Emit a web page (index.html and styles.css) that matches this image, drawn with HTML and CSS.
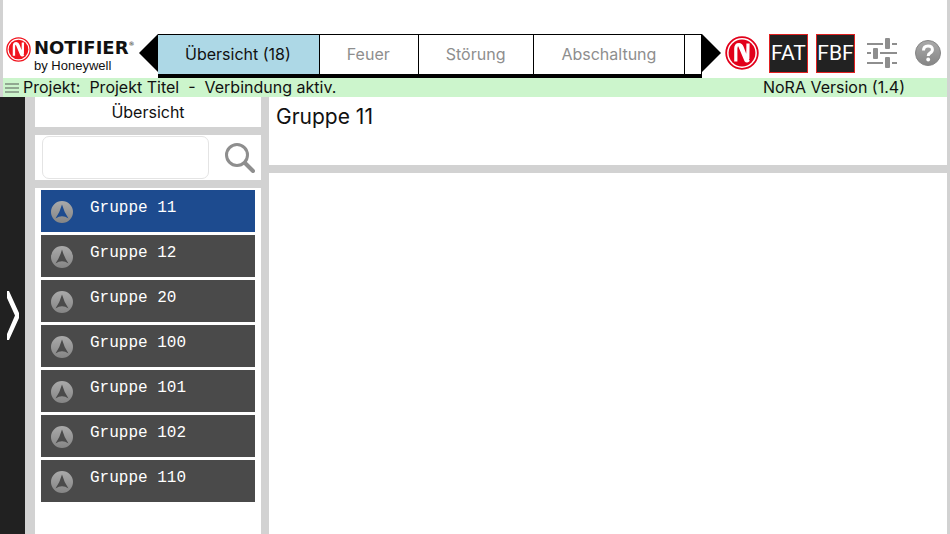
FILE: index.html
```html
<!DOCTYPE html>
<html lang="de">

<head>
    <meta charset="UTF-8">
    <meta name="viewport" content="width=device-width, initial-scale=1.0">
    <title>NoRA</title>
    <link rel="stylesheet" href="styles.css">
</head>

<body>
    <!-- shared symbols -->
    <svg class="symbols" aria-hidden="true">
        <defs>
            <linearGradient id="grey" x1="0" y1="0" x2="0" y2="1">
                <stop offset="0" stop-color="#aaa" />
                <stop offset="1" stop-color="#858585" />
            </linearGradient>
            <symbol id="logo" viewBox="0 0 34 34">
                <circle cx="17" cy="17" r="15.8" fill="#fff" stroke="currentColor" stroke-width="1.8" />
                <circle cx="17" cy="17" r="13.4" fill="currentColor" />
                <path d="M10.800 25.500V12.500Q10.800 8.500 14 8.500 16 8.500 17 11L21 21.500Q22 24 22.800 22.500L23 7.500" fill="none" stroke="#fff" stroke-width="3.2" />
                <path d="M14 9L20.500 24.500Q22 26.500 24 24" fill="none" stroke="#fff" stroke-width="2.4" />
            </symbol>
            <symbol id="arrow" viewBox="0 0 22 22">
                <path fill="url(#grey)" fill-rule="evenodd" d="M11 0a11 11 0 1 0 0 22 11 11 0 0 0 0-22zM11 3.500Q13 11 17.500 17.500 11 13 4.500 17.500 9 11 11 3.500z" />
            </symbol>
        </defs>
    </svg>

    <div class="app">
        <header class="header">
            <div class="brand">
                <svg class="brand-logo"><use href="#logo" /></svg>
                <div class="brand-text">
                    <div class="brand-name">NOTIFIER<sup>®</sup></div>
                    <div class="brand-sub">by Honeywell</div>
                </div>
            </div>
            <nav class="tabs">
                <button class="tab-scroll" type="button" aria-label="Zurück">
                    <svg viewBox="0 0 19 38"><path d="M19 0v38L0 19z" /></svg>
                </button>
                <div class="tab-list">
                    <button class="tab active" type="button">Übersicht (18)</button>
                    <button class="tab" type="button">Feuer</button>
                    <button class="tab" type="button">Störung</button>
                    <button class="tab" type="button">Abschaltung</button>
                </div>
                <button class="tab-scroll" type="button" aria-label="Weiter">
                    <svg viewBox="0 0 19 38"><path d="M0 0v38l19-19z" /></svg>
                </button>
            </nav>
            <div class="tools">
                <button class="tool" type="button" aria-label="Notifier">
                    <svg class="tool-logo"><use href="#logo" /></svg>
                </button>
                <button class="tool panel" type="button">FAT</button>
                <button class="tool panel" type="button">FBF</button>
                <button class="tool sliders" type="button" aria-label="Einstellungen">
                    <svg width="30" height="30" viewBox="0 0 30 30" fill="#8e8e8e">
                        <path d="M0 5h16v2H0zM25 5h5v2h-5zM0 14h4v2H0zM13 14h17v2H13zM0 24h16v2H0zM25 24h5v2h-5z" />
                        <rect x="18" y="0" width="5" height="11" rx="1" />
                        <rect x="6" y="10" width="5" height="11" rx="1" />
                        <rect x="18" y="19" width="5" height="11" rx="1" />
                    </svg>
                </button>
                <button class="tool" type="button" aria-label="Hilfe">
                    <svg width="26" height="26" viewBox="0 0 26 26">
                        <circle cx="13" cy="13" r="12.5" fill="url(#grey)" stroke="#858585" />
                        <path d="M8.500 10.500Q8.500 6 13 6t4.400 3.800q0 2-2.400 3.300-1.800 1.100-1.800 3" fill="none" stroke="#fff" stroke-width="3" />
                        <circle cx="13.2" cy="19.5" r="1.9" fill="#fff" />
                    </svg>
                </button>
            </div>
        </header>

        <div class="status">
            <button class="menu" type="button" aria-label="Menü">
                <svg width="14" height="10" viewBox="0 0 14 10"><path d="M0 1h14M0 5h14M0 9h14" stroke="#7d8f7d" stroke-width="1.5" /></svg>
            </button>
            <span class="status-text">Projekt:  Projekt Titel  -  Verbindung aktiv.</span>
            <span class="version">NoRA Version (1.4)</span>
        </div>

        <div class="content">
            <button class="drawer" type="button" aria-label="Öffnen">
                <svg width="12" height="49" viewBox="0 0 12 49"><path d="M0 0h2l10 22v5L2 49H0v-6l8-18.500L0 7z" fill="#fff" /></svg>
            </button>
            <aside class="sidebar">
                <h2 class="sidebar-title">Übersicht</h2>
                <form class="search">
                    <input type="text" aria-label="Suche">
                    <button type="button" aria-label="Suchen">
                        <svg width="30" height="30" viewBox="0 0 30 30" fill="none" stroke="#8e8e8e">
                            <circle cx="12" cy="12" r="10.500" stroke-width="3" />
                            <path d="M20 20l8 8" stroke-width="4" stroke-linecap="round" />
                        </svg>
                    </button>
                </form>
                <div class="groups">
                    <button class="group active" type="button"><svg><use href="#arrow" /></svg><span>Gruppe 11</span></button>
                    <button class="group" type="button"><svg><use href="#arrow" /></svg><span>Gruppe 12</span></button>
                    <button class="group" type="button"><svg><use href="#arrow" /></svg><span>Gruppe 20</span></button>
                    <button class="group" type="button"><svg><use href="#arrow" /></svg><span>Gruppe 100</span></button>
                    <button class="group" type="button"><svg><use href="#arrow" /></svg><span>Gruppe 101</span></button>
                    <button class="group" type="button"><svg><use href="#arrow" /></svg><span>Gruppe 102</span></button>
                    <button class="group" type="button"><svg><use href="#arrow" /></svg><span>Gruppe 110</span></button>
                </div>
            </aside>
            <main class="main">
                <h1 class="main-title">Gruppe 11</h1>
                <div class="main-body"></div>
            </main>
        </div>
    </div>
</body>

</html>
```
FILE: styles.css
```css
* {
    box-sizing: border-box;
    margin: 0;
    padding: 0;
}

body {
    font-family: Inter, "Liberation Sans", sans-serif;
    font-size: 16px;
    color: #111;
    background-color: #fff;
}

button {
    border: none;
    background: none;
    font: inherit;
    color: inherit;
    cursor: pointer;
}

svg {
    display: block;
}

.symbols {
    position: absolute;
    width: 0;
    height: 0;
}

.app {
    display: flex;
    flex-direction: column;
    min-height: 100vh;
    background-color: #d2d2d2;
}

/* header */
.header {
    display: flex;
    margin: 0 3px;
    padding-top: 34px;
    background-color: #fff;
}

.brand {
    display: flex;
    flex: none;
    gap: 3px;
    width: 136px;
    padding: 3px 0 0 3px;
}

.brand-logo {
    flex: none;
    width: 25px;
    height: 25px;
    color: #f0141e;
}

.brand-text {
    padding-top: 2px;
    white-space: nowrap;
}

.brand-name {
    font-family: "DejaVu Sans", sans-serif;
    font-size: 18px;
    font-weight: bold;
    line-height: 18px;
}

.brand-name sup {
    font-size: 6px;
    font-weight: normal;
    line-height: 1px;
    vertical-align: 8px;
}

.brand-sub {
    font-family: "Liberation Sans", sans-serif;
    font-size: 13px;
    line-height: 18px;
}

.tabs {
    display: flex;
    flex: 1;
    min-width: 0;
}

.tab-scroll {
    flex: none;
    width: 19px;
    height: 38px;
}

.tab-list {
    display: flex;
    flex: 1;
    min-width: 0;
    height: 44px;
    overflow: hidden;
    border: solid #000;
    border-width: 1px 1px 4px 0;
}

.tab {
    flex: none;
    padding: 0 28px 2px 27px;
    border-right: 1px solid #000;
    color: #8e8e8e;
}

.tab.active {
    background-color: #add8e6;
    color: #111;
}

.tools {
    display: flex;
    flex: none;
    align-items: center;
    gap: 8px;
    height: 38px;
    padding: 0 6px 0 4px;
}

.tool-logo {
    width: 34px;
    height: 34px;
    margin-right: 2px;
    color: #e2001a;
}

.panel {
    width: 39px;
    height: 39px;
    border: 1px solid #e02020;
    background-color: #222;
    color: #fff;
    font-family: Roboto, sans-serif;
    font-size: 21px;
}

.sliders {
    margin: 0 10px 0 4px;
}

/* status bar */
.status {
    display: flex;
    align-items: center;
    height: 19px;
    margin: 0 3px;
    padding: 0 42px 0 2px;
    background-color: #ccf5cc;
    line-height: 19px;
}

.status-text {
    margin-left: 4px;
    white-space: pre;
}

.version {
    margin-left: auto;
}

/* content */
.content {
    display: flex;
    flex: 1;
    padding-right: 3px;
}

.drawer {
    flex: none;
    width: 25px;
    padding-left: 7px;
    background-color: #212121;
}

.sidebar {
    display: flex;
    flex: none;
    flex-direction: column;
    gap: 8px;
    width: 226px;
    margin: 0 8px 0 10px;
}

.sidebar-title {
    height: 30px;
    background-color: #fff;
    font-size: 16px;
    font-weight: normal;
    line-height: 30px;
    text-align: center;
}

.search {
    display: flex;
    align-items: center;
    justify-content: space-between;
    height: 45px;
    padding: 0 6px 0 7px;
    background-color: #fff;
}

.search input {
    width: 167px;
    height: 43px;
    padding: 0 8px;
    border: 1px solid #e4e4e4;
    border-radius: 7px;
    font: inherit;
}

.groups {
    display: flex;
    flex: 1;
    flex-direction: column;
    gap: 3px;
    padding: 2px 6px;
    background-color: #fff;
}

.group {
    display: flex;
    flex: none;
    gap: 17px;
    height: 42px;
    padding: 8px 10px;
    background-color: #4a4a4a;
    color: #fff;
    font-family: "Liberation Mono", monospace;
    line-height: 20px;
}

.group svg {
    width: 22px;
    height: 22px;
    margin-top: 3px;
}

.group.active {
    background-color: #1d4b8f;
}

.main {
    display: flex;
    flex: 1;
    flex-direction: column;
    gap: 8px;
    min-width: 0;
}

.main-title {
    height: 68px;
    padding: 6px 7px;
    background-color: #fff;
    font-size: 21px;
    font-weight: normal;
    line-height: 28px;
}

.main-body {
    flex: 1;
    background-color: #fff;
}
```
